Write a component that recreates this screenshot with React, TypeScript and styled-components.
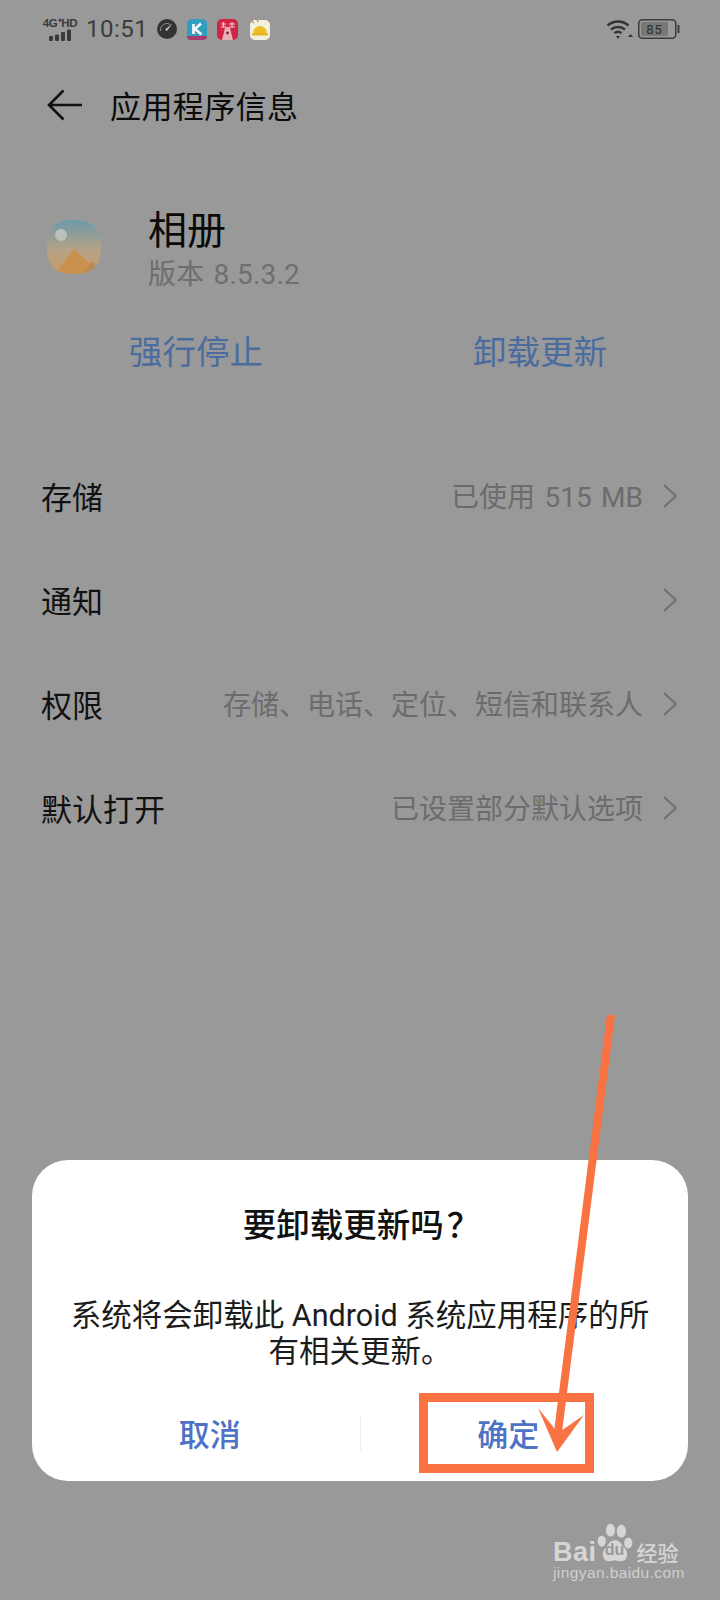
import React from "react";
import styled, { createGlobalStyle } from "styled-components";

const CJK = `"Noto Sans CJK SC", "Noto Sans", sans-serif`;
const LATIN_CJK = `Roboto, "Noto Sans CJK SC", sans-serif`;
const Global = createGlobalStyle`
  html, body { margin: 0; padding: 0; background: #999; }
  body { font-family: ${CJK}; }
`;
const Page = styled.div`
  position: relative; width: 720px; height: 1600px; overflow: hidden; background: #999999;
  display: flex; flex-direction: column;
`;
const StatusBar = styled.div`
  height: 58px; padding: 0 40px 0 42px; display: flex; align-items: center; flex-shrink: 0;
`;
const Network = styled.div`
  width: 36px; display: flex; flex-direction: column; align-items: center; color: #3a3a3a;
`;
const NetLabel = styled.span`
  font: 700 11.5px/12px "Liberation Sans", sans-serif; letter-spacing: -0.3px; white-space: nowrap;
`;
const Time = styled.span`
  margin-left: 8px; font: 400 24px/30px Roboto, sans-serif; color: #3b3b3b; letter-spacing: 0.5px;
`;
const NotifyIcons = styled.div`
  margin-left: 9px; display: flex; align-items: center; gap: 10px;
`;
const RightIcons = styled.div`
  margin-left: auto; display: flex; align-items: center; gap: 4px;
`;
const Header = styled.header`
  height: 86px; padding: 8px 0 0 47px; display: flex; align-items: center; gap: 28px;
  border-bottom: 1px solid #969696; box-sizing: border-box; flex-shrink: 0;
`;
const Title = styled.h1`
  margin: 0; font: 400 31px/40px ${CJK}; color: #0b0b0b; letter-spacing: 0.4px;
`;
const AppInfo = styled.section`
  padding: 60px 0 0 47px; display: flex; gap: 47px; height: 106px;
`;
const AppText = styled.div`
  display: flex; flex-direction: column; margin-top: -2px;
`;
const AppName = styled.div`
  font: 400 39px/50px ${CJK}; color: #0a0a0a;
`;
const Version = styled.div`
  font: 400 28px/36px ${LATIN_CJK}; color: #6e6e6e; margin-top: 5px; letter-spacing: 0.2px; word-spacing: 2px;
`;
const Actions = styled.div`
  margin-top: 15px; display: grid; grid-template-columns: 344px 344px; height: 50px; align-items: center;
`;
const ActionButton = styled.button`
  border: 0; background: none; padding: 0 0 0 48px; color: #4a6c9f; font: 400 33.5px/50px ${CJK};
  text-align: center;
`;
const Rows = styled.div`
  margin-top: 69px; display: flex; flex-direction: column;
`;
const Row = styled.div`
  height: 104px; padding: 0 42px 0 41px; display: flex; align-items: center;
`;
const RowLabel = styled.span`
  font: 400 31px/40px ${CJK}; color: #111;
`;
const RowValue = styled.span`
  margin-left: auto; margin-right: 19px; padding-top: 4px; font: 400 28px/36px ${LATIN_CJK}; color: #6c6c6c;
  word-spacing: 2.5px;
`;
const Dialog = styled.div`
  position: absolute; left: 32px; top: 1160px; width: 656px; height: 321px; background: #fff;
  border-radius: 36px; display: flex; flex-direction: column; align-items: center;
`;
const DialogTitle = styled.h2`
  margin: 42px 0 0; font: 500 33.5px/42px ${CJK}; color: #111; white-space: nowrap;
`;
const QuestionMark = styled.span`
  margin: 0 -3px 0 3px;
`;
const DialogBody = styled.p`
  margin: 54px 0 0; width: 590px; text-align: center; font: 400 30.5px/36px ${LATIN_CJK}; color: #1c1c1c;
`;
const DialogActions = styled.div`
  margin-top: 38px; width: 100%; display: grid; grid-template-columns: 1fr 1px 1fr; align-items: center; height: 50px;
`;
const DialogButton = styled.button<{ $shift: number }>`
  border: 0; background: none; padding: 0; color: #4e72c4; font: 500 31px/50px ${CJK};
  transform: translateX(${(p) => p.$shift}px);
`;
const Divider = styled.div`
  width: 1px; height: 36px; background: #ececec;
`;
const Annotation = styled.div`
  position: absolute; left: 419px; top: 1393px; width: 175px; height: 80px; box-sizing: border-box;
  border: 9px solid #f97241;
`;
const Arrow = styled.svg`
  position: absolute; left: 530px; top: 1000px;
`;
const Watermark = styled.div`
  position: absolute; left: 553px; top: 1522px; display: flex; flex-direction: column; color: #d6d6d6;
`;
const LogoRow = styled.div`
  display: flex; align-items: flex-end; height: 42px;
`;
const BaiText = styled.span`
  font: 700 27px/28px "Liberation Sans", sans-serif; letter-spacing: 0.5px; margin-bottom: -2px;
`;
const Paw = styled.div`
  position: relative; width: 38px; height: 42px; margin: 0 3px 0 -1px;
`;
const PawText = styled.span`
  position: absolute; left: 5px; bottom: 5px; width: 28px; text-align: center;
  font: 700 16px/18px "Liberation Sans", sans-serif; color: #999;
`;
const WaterCn = styled.span`
  font: 500 21px/26px ${CJK}; margin-bottom: -1px; white-space: nowrap;
`;
const WaterUrl = styled.span`
  margin-top: -1px; font: 400 15.5px/20px "Liberation Sans", sans-serif; letter-spacing: 0.4px; color: #d0d0d0; white-space: nowrap;
`;

const Chevron = () => (
  <svg width="16" height="26" viewBox="0 0 16 26" fill="none">
    <path d="M2 2l12 11L2 24" stroke="#6f6f6f" strokeWidth="2" />
  </svg>
);

const rows = [
  ["存储", "已使用 515 MB"],
  ["通知", ""],
  ["权限", "存储、电话、定位、短信和联系人"],
  ["默认打开", "已设置部分默认选项"],
];

export default function App() {
  return (
    <Page>
      <Global />
      <StatusBar>
        <Network>
          <NetLabel>4G⁺HD</NetLabel>
          <svg width="24" height="12" viewBox="0 0 24 12" fill="#3a3a3a">
            <rect x="1" y="7" width="4" height="5" rx="1" />
            <rect x="7" y="5.500" width="4" height="6.500" rx="1" />
            <rect x="13" y="3" width="4" height="9" rx="1" />
            <rect x="19" y="0.500" width="4" height="11.500" rx="1" />
          </svg>
        </Network>
        <Time>10:51</Time>
        <NotifyIcons>
          <svg width="20" height="20" viewBox="0 0 20 20">
            <circle cx="10" cy="10" r="10" fill="#333" />
            <path d="M3.500 12a6.500 6.500 0 0 1 10-6.500" stroke="#8f8f8f" strokeWidth="1" fill="none" />
            <path d="M8 10.500l7-5.500-5 7z" fill="#c4c4c4" />
          </svg>
          <svg width="20" height="21" viewBox="0 0 20 21">
            <rect width="20" height="21" rx="5" fill="#2f9fc0" />
            <path d="M0 17h20a4 4 0 0 1-4 4H4a4 4 0 0 1-4-4z" fill="#a83a6c" />
            <path d="M6.500 5v10M14 4.500L8 10l6.500 5.500" stroke="#f2f6f7" strokeWidth="2.800" fill="none" />
          </svg>
          <svg width="21" height="21" viewBox="0 0 21 21">
            <rect width="21" height="21" rx="5" fill="#cf2546" />
            <path d="M4 5h5M6.500 3v5M4 8h5M12 5h6M15 3v5M12 8h6" stroke="#f0d3d8" strokeWidth="1.100" />
            <path d="M7.500 11a3 3 0 0 1 6 0l2.500 10H5z" fill="#e8b0b8" />
            <circle cx="10.500" cy="14" r="1.400" fill="#8a2230" />
          </svg>
          <svg width="23" height="22" viewBox="0 0 23 22">
            <rect x="2" y="2" width="20" height="20" rx="5" fill="#f3f0dd" />
            <path d="M5 15a7 7 0 0 1 14 0z" fill="#eebe2a" />
            <rect x="4" y="15" width="16" height="2.500" rx="1.200" fill="#e5b322" />
            <path d="M1 1l5 4M9 1l1 3" stroke="#b89a5c" strokeWidth="1.500" />
          </svg>
        </NotifyIcons>
        <RightIcons>
          <svg width="28" height="22" viewBox="0 0 28 22" fill="none" stroke="#333">
            <path d="M1.500 7.500a16 16 0 0 1 21 0" strokeWidth="2.600" />
            <path d="M5 11.500a11 11 0 0 1 14 0" strokeWidth="2.600" />
            <path d="M8.500 15a6 6 0 0 1 7 0" strokeWidth="2.400" />
            <path d="M10 18h4l-2 3z" fill="#333" stroke="none" />
            <path d="M22 19l2.500-3 2.500 3z" fill="#333" stroke="none" />
          </svg>
          <svg width="42" height="20" viewBox="0 0 42 20">
            <rect x="0.750" y="0.750" width="37" height="18.500" rx="3.500" fill="none" stroke="#3c3c3c" strokeWidth="1.500" />
            <rect x="3" y="3" width="27" height="14" rx="1.500" fill="#777" />
            <rect x="39.500" y="6" width="2" height="8" fill="#3c3c3c" />
            <text x="16.500" y="15" textAnchor="middle" fontFamily="Roboto, sans-serif" fontSize="13" letterSpacing="1" fill="#2e2e2e">85</text>
          </svg>
        </RightIcons>
      </StatusBar>
      <Header>
        <svg width="35" height="32" viewBox="0 0 35 32" fill="none" stroke="#111" strokeWidth="2.600">
          <path d="M16.500 1.500L2 16l14.500 14.500M2 16h33" />
        </svg>
        <Title>应用程序信息</Title>
      </Header>
      <AppInfo>
        <svg width="54" height="54" viewBox="0 0 54 54" style={{ marginTop: 16 }}>
          <defs>
            <linearGradient id="sky" x1="0" y1="0" x2="0" y2="1">
              <stop offset="0" stopColor="#6c9aa8" />
              <stop offset="0.550" stopColor="#b5a387" />
              <stop offset="1" stopColor="#c49a68" />
            </linearGradient>
            <clipPath id="squircle">
              <path d="M27 0C46 0 54 8 54 27S46 54 27 54 0 46 0 27 8 0 27 0z" />
            </clipPath>
          </defs>
          <g clipPath="url(#squircle)">
            <rect width="54" height="54" fill="url(#sky)" />
            <circle cx="14" cy="15" r="6" fill="#bcc0be" />
            <path d="M8 54L27 29l27 25z" fill="#c9914f" />
            <path d="M36 54l9-13 12 13z" fill="#b88c58" />
          </g>
        </svg>
        <AppText>
          <AppName>相册</AppName>
          <Version>版本 8.5.3.2</Version>
        </AppText>
      </AppInfo>
      <Actions>
        <ActionButton>强行停止</ActionButton>
        <ActionButton>卸载更新</ActionButton>
      </Actions>
      <Rows>
        {rows.map(([label, value]) => (
          <Row key={label}>
            <RowLabel>{label}</RowLabel>
            <RowValue>{value}</RowValue>
            <Chevron />
          </Row>
        ))}
      </Rows>
      <Dialog>
        <DialogTitle>要卸载更新吗<QuestionMark>？</QuestionMark></DialogTitle>
        <DialogBody>系统将会卸载此 Android 系统应用程序的所有相关更新。</DialogBody>
        <DialogActions>
          <DialogButton $shift={14}>取消</DialogButton>
          <Divider />
          <DialogButton $shift={-16}>确定</DialogButton>
        </DialogActions>
      </Dialog>
      <Annotation />
      <Arrow width="100" height="460" viewBox="0 0 100 460">
        <path d="M81 15L27 440" stroke="#f97241" strokeWidth="8" fill="none" />
        <path d="M27 452L8 408l20 25 26-18z" fill="#f97241" />
      </Arrow>
      <Watermark>
        <LogoRow>
          <BaiText>Bai</BaiText>
          <Paw>
            <svg width="38" height="42" viewBox="0 0 38 46" fill="#d6d6d6">
              <ellipse cx="4.500" cy="21" rx="4.500" ry="6" />
              <ellipse cx="14" cy="9" rx="5" ry="7" />
              <ellipse cx="26" cy="10" rx="5" ry="7" />
              <ellipse cx="33.500" cy="23" rx="4.500" ry="6" />
              <path d="M19 20c6 0 7 5 11 9 4 5 3 14-5 14-3 0-4-1-6-1s-3 1-6 1c-8 0-9-9-5-14 4-4 5-9 11-9z" />
            </svg>
            <PawText>du</PawText>
          </Paw>
          <WaterCn>经验</WaterCn>
        </LogoRow>
        <WaterUrl>jingyan.baidu.com</WaterUrl>
      </Watermark>
    </Page>
  );
}
